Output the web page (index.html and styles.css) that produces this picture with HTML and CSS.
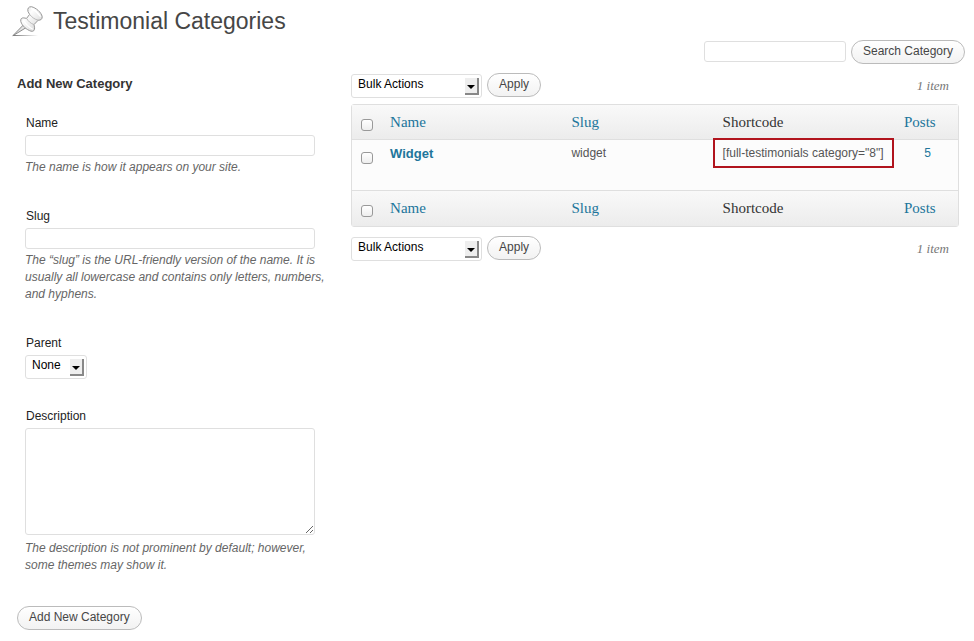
FILE: index.html
```html
<!DOCTYPE html>
<html lang="en">
<head>
<meta charset="utf-8">
<title>Testimonial Categories</title>
<link rel="stylesheet" href="styles.css">
</head>
<body>
<header class="page-header">
  <svg class="pin" viewBox="0 0 32 32" aria-hidden="true">
    <defs>
      <linearGradient id="metal" x1="0" y1="0" x2="1" y2="1">
        <stop offset="0" stop-color="#d0d0d0"/>
        <stop offset=".35" stop-color="#fdfdfd"/>
        <stop offset=".6" stop-color="#ececec"/>
        <stop offset="1" stop-color="#c4c4c4"/>
      </linearGradient>
      <linearGradient id="shade" x1="0" y1="0" x2="1" y2="0">
        <stop offset="0" stop-color="#777"/>
        <stop offset="1" stop-color="#777" stop-opacity="0"/>
      </linearGradient>
    </defs>
    <rect x="1" y="30" width="25" height="1" fill="url(#shade)"/>
    <path d="M11.800 19.500L14.800 22.200 .8 30.800z" fill="#e4e4e4" stroke="#808080" stroke-width=".9" stroke-linejoin="round"/>
    <path d="M8.800 16.500C8.300 14 9.600 12.600 11.800 12.900L14.600 13.400 17.600 9.400 16 6.500C15.200 3.600 16.600 1.500 19.400 1.700 24 2.800 29.200 7.200 30.200 11.600 30.400 14 28.800 15.400 26.200 15.200L22 19.600 22.600 22.800C22.800 25.400 21.400 26.800 19 26.200 14.400 24.600 10.200 21 8.800 16.500z" fill="url(#metal)" stroke="#989898" stroke-width="1" stroke-linejoin="round"/>
    <path d="M17.600 9.400c2 2.600 5 5 8.600 5.800M14.600 13.400c1.600 2.800 4 5 7.400 6.200" fill="none" stroke="#b4b4b4" stroke-width=".9"/>
    <path d="M19.400 3.400c3.400 1.800 6.600 4.400 8.800 7.800M11.400 15.200c2 3.600 5 6.400 9 8.800" fill="none" stroke="#fff" stroke-width="1.300" stroke-linecap="round"/>
  </svg>
  <h1>Testimonial Categories</h1>
</header>

<form class="search" role="search">
  <input class="text" type="search" aria-label="Search Category">
  <button class="button" type="button">Search Category</button>
</form>

<div class="columns">
  <main class="list">
    <div class="tablenav">
      <span class="select bulk"><select aria-label="Bulk Actions"><option>Bulk Actions</option></select></span>
      <button class="button" type="button">Apply</button>
      <span class="count">1 item</span>
    </div>
    <div class="frame">
      <table>
        <colgroup><col class="col-check"><col class="col-name"><col class="col-slug"><col class="col-code"><col class="col-posts"></colgroup>
        <thead>
          <tr>
            <th class="check"><input type="checkbox" aria-label="Select all"></th>
            <th><a href="#">Name</a></th>
            <th><a href="#">Slug</a></th>
            <th>Shortcode</th>
            <th><a href="#">Posts</a></th>
          </tr>
        </thead>
        <tbody>
          <tr>
            <td class="check"><input type="checkbox" aria-label="Select Widget"></td>
            <td><a class="row-title" href="#">Widget</a></td>
            <td>widget</td>
            <td><span class="shortcode">[full-testimonials category="8"]</span></td>
            <td class="posts"><a href="#">5</a></td>
          </tr>
        </tbody>
        <tfoot>
          <tr>
            <th class="check"><input type="checkbox" aria-label="Select all"></th>
            <th><a href="#">Name</a></th>
            <th><a href="#">Slug</a></th>
            <th>Shortcode</th>
            <th><a href="#">Posts</a></th>
          </tr>
        </tfoot>
      </table>
    </div>
    <div class="tablenav bottom">
      <span class="select bulk"><select aria-label="Bulk Actions"><option>Bulk Actions</option></select></span>
      <button class="button" type="button">Apply</button>
      <span class="count">1 item</span>
    </div>
  </main>

  <form class="add">
    <h2>Add New Category</h2>
    <div class="field">
      <label for="name">Name</label>
      <input class="text" id="name" type="text">
      <p>The name is how it appears on your site.</p>
    </div>
    <div class="field">
      <label for="slug">Slug</label>
      <input class="text" id="slug" type="text">
      <p>The “slug” is the URL-friendly version of the name. It is usually all lowercase and contains only letters, numbers, and hyphens.</p>
    </div>
    <div class="field compact">
      <label for="parent">Parent</label>
      <span class="select parent"><select id="parent"><option>None</option></select></span>
    </div>
    <div class="field">
      <label for="description">Description</label>
      <textarea class="text" id="description"></textarea>
      <p>The description is not prominent by default; however, some themes may show it.</p>
    </div>
    <button class="button submit" type="button">Add New Category</button>
  </form>
</div>
</body>
</html>
```
FILE: styles.css
```css
*, *::before, *::after { box-sizing: border-box; }

body {
  margin: 0;
  background: #fff;
  color: #333;
  font: 12px/17px "Liberation Sans", Arial, sans-serif;
}

a { color: #21759b; text-decoration: none; }

.page-header {
  display: flex;
  align-items: center;
  gap: 9px;
  height: 40px;
  padding: 2px 12px 0;
}

.pin { width: 32px; height: 32px; }

h1 {
  margin: 0;
  color: #464646;
  font-size: 23px;
  font-weight: 400;
  line-height: 36px;
}

.search {
  display: flex;
  justify-content: flex-end;
  align-items: flex-start;
  gap: 5px;
  padding-right: 9px;
}

.search .text { width: 142px; margin-top: 1px; }

.text {
  display: block;
  height: 21px;
  margin: 0;
  padding: 2px 4px;
  border: 1px solid #dfdfdf;
  border-radius: 3px;
  background: #fff;
  font: inherit;
}

.button {
  height: 24px;
  padding: 0 11px 2px;
  border: 1px solid #bbb;
  border-radius: 12px;
  background: linear-gradient(#fff, #f2f2f2);
  color: #464646;
  font: inherit;
}

.columns {
  display: grid;
  grid-template-columns: 35fr 65fr;
  padding: 9px 15px 0 16px;
}

.list { grid-column: 2; grid-row: 1; padding-left: 5px; min-width: 0; }
.add { grid-column: 1; grid-row: 1; padding-left: 1px; }

.tablenav { display: flex; align-items: center; gap: 5px; height: 24px; margin-bottom: 7px; }
.tablenav.bottom { margin: 9px 0 0; }

.count {
  margin-left: auto;
  padding-right: 10px;
  color: #777;
  font: italic 13px/17px "Liberation Serif", Georgia, serif;
}

.select { position: relative; display: block; height: 24px; }
.select.bulk { width: 131px; }
.select.parent { width: 62px; }

.tablenav .select { margin-top: 2px; }

.select select {
  width: 100%;
  height: 24px;
  margin: 0;
  padding: 0 20px 3px 6px;
  border: 1px solid #dfdfdf;
  border-radius: 3px;
  background: #fff;
  color: #000;
  font: inherit;
  appearance: none;
}

.select::before {
  content: "";
  position: absolute;
  top: 4px;
  right: 3px;
  width: 14px;
  height: 17px;
  border: solid #888;
  border-width: 0 2px 2px 0;
  background: #eee;
  pointer-events: none;
}

.select::after {
  content: "";
  position: absolute;
  top: 11px;
  right: 7px;
  border: solid transparent;
  border-width: 4px 4px 0;
  border-top-color: #000;
  pointer-events: none;
}

.frame {
  border: 1px solid #dfdfdf;
  border-radius: 3px;
  background: #fcfcfc;
}

table { width: 100%; border-spacing: 0; table-layout: fixed; }
.col-check { width: 31px; }
.col-name { width: 30%; }
.col-slug { width: 25%; }
.col-code { width: 30%; }
.col-posts { width: 61px; }

th, td { padding: 0 7px; text-align: left; vertical-align: top; }

th {
  height: 35px;
  padding-top: 8px;
  background: linear-gradient(#f9f9f9, #ececec);
  font: 400 15px/19px "Liberation Serif", Georgia, serif;
}

thead th { border-bottom: 1px solid #dfdfdf; }
tfoot th { height: 36px; border-top: 1px solid #dfdfdf; }

td { height: 50px; padding-top: 5px; color: #555; }
td.posts { text-align: center; }
.row-title { font-size: 13px; font-weight: 700; }

th.check, td.check { padding: 14px 0 0 9px; line-height: 12px; }
td.check { padding-top: 12px; }

.check input {
  display: block;
  width: 12px;
  height: 12px;
  margin: 0;
  border: 1px solid #999;
  border-radius: 3px;
  background: linear-gradient(#fff, #eee);
  appearance: none;
}

.shortcode { position: relative; white-space: nowrap; }

.shortcode::after {
  content: "";
  position: absolute;
  inset: -8px -10px;
  border: 2px solid #b1141d;
}

h2 { margin: 2px 0 21px; color: #333; font-size: 13px; line-height: 17px; }

.field { margin: 0 9px 30px 8px; }
.field.compact { margin-bottom: 27px; }
.field label { display: block; padding-left: 1px; margin-bottom: 2px; line-height: 20px; color: #222; }
.field .text { width: calc(100% - 22px); }
.field textarea.text { height: 107px; margin-bottom: 5px; resize: both; }
.field p { margin: 3px 0 0; color: #666; font-style: italic; }
.submit { margin-top: 2px; }
```
